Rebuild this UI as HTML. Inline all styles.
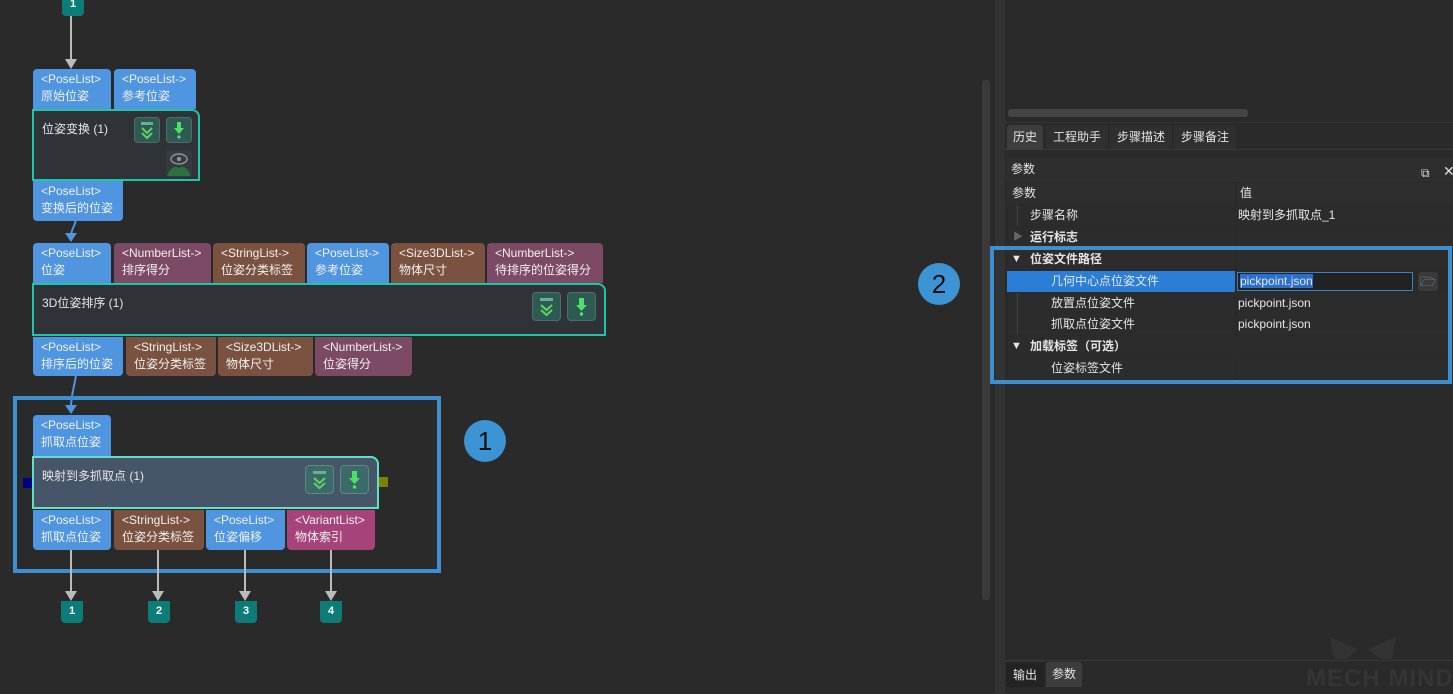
<!DOCTYPE html>
<html><head><meta charset="utf-8"><style>
*{margin:0;padding:0;box-sizing:border-box}
html,body{width:1453px;height:694px;overflow:hidden}
body{background:#2a2a2a;position:relative;font-family:"Liberation Sans","Noto Sans CJK SC",sans-serif;color:#e6e6e6}
.a{position:absolute}
.p{position:absolute;font-size:12px;line-height:17px;padding:2px 0 0 8px;color:#f0f0f0;border-radius:4px 4px 0 0;white-space:nowrap}
.pb{border-radius:0 0 4px 4px}
.bl{background:#4f95e0}.pu{background:#7d4a66}.br{background:#7b5240}.pk{background:#a7437b}
.n{position:absolute;background:#2f3337;border:2px solid #1ec5a8;border-radius:0 8px 0 0;font-size:12px}
.n span{position:absolute;left:8px;top:9px}
.btn{position:absolute;width:26px;height:26px;border:1px solid #4e6e66;background:#2d5a52;border-radius:4px}
.t{position:absolute;background:#0b7c78;color:#fff;font-size:11px;font-weight:bold;text-align:center;line-height:20px;border-radius:0 0 4px 4px;width:22px;height:22px}
.ln{position:absolute;width:2px;background:#bbb}
.ar{position:absolute;width:0;height:0;border-left:6px solid transparent;border-right:6px solid transparent;border-top:10px solid #bbb}
.row{position:absolute;left:1007px;width:446px;height:21px;font-size:12px;line-height:21px;border-bottom:1px solid #232323}
.row .c1{position:absolute;left:0;width:228px;height:21px;background:#2c2c2c}
.row .c2{position:absolute;left:230px;right:0;height:21px;background:#2c2c2c}
.tab{position:absolute;top:125px;height:24px;font-size:12px;line-height:24px;text-align:center;background:#2f2f2f;border-radius:3px 3px 0 0}
.tl{position:absolute;left:10px;top:0;width:1px;height:21px;background:#444}
</style></head><body>
<div class="a" style="left:982px;top:80px;width:8px;height:520px;background:#3a3a3a;border-radius:3px"></div>
<div class="a" style="left:995px;top:0;width:10px;height:694px;background:#323232"></div>

<div class="t" style="left:62px;top:-6px">1</div>
<div class="ln" style="left:70px;top:16px;height:44px"></div><div class="ar" style="left:65px;top:59px"></div>

<div class="p bl" style="left:33px;top:69px;width:78px;height:40px">&lt;PoseList&gt;<br>原始位姿</div>
<div class="p bl" style="left:114px;top:69px;width:82px;height:40px">&lt;PoseList-&gt;<br>参考位姿</div>
<div class="n" style="left:32px;top:109px;width:168px;height:72px"><span>位姿变换 (1)</span></div>
<div class="btn" style="left:134px;top:117px"><svg width="24" height="24"><rect x="6" y="4" width="12" height="3" fill="#6ab08a"/><path d="M7 10l5 5 5-5M7 15l5 5 5-5" stroke="#5fd26a" stroke-width="2" fill="none"/></svg></div>
<div class="btn" style="left:166px;top:117px"><svg width="24" height="24"><path d="M10 4h4v6h3l-5 6-5-6h3z" fill="#4fe06a"/><circle cx="12" cy="19" r="1.6" fill="#4fe06a"/></svg></div>
<div class="a" style="left:166px;top:150px;width:26px;height:27px;background:#343a3e;border-radius:3px"><svg width="26" height="27"><ellipse cx="13" cy="9" rx="8" ry="5" fill="none" stroke="#8a9298" stroke-width="1.5"/><circle cx="13" cy="9" r="2.2" fill="#8a9298"/><path d="M1 26c3-8 8-11 12-8 4-3 9 0 12 8z" fill="#2e7040"/></svg></div>
<div class="p bl pb" style="left:33px;top:181px;width:90px;height:40px">&lt;PoseList&gt;<br>变换后的位姿</div>
<svg class="a" style="left:60px;top:220px" width="30" height="24"><path d="M16 0 C14 8 11 10 11 16" stroke="#4f95e0" stroke-width="2" fill="none"/><path d="M5 13h12l-6 9z" fill="#4f95e0"/></svg>

<div class="p bl" style="left:33px;top:243px;width:78px;height:40px">&lt;PoseList&gt;<br>位姿</div>
<div class="p pu" style="left:114px;top:243px;width:97px;height:40px">&lt;NumberList-&gt;<br>排序得分</div>
<div class="p br" style="left:213px;top:243px;width:92px;height:40px">&lt;StringList-&gt;<br>位姿分类标签</div>
<div class="p bl" style="left:307px;top:243px;width:82px;height:40px">&lt;PoseList-&gt;<br>参考位姿</div>
<div class="p br" style="left:391px;top:243px;width:94px;height:40px">&lt;Size3DList-&gt;<br>物体尺寸</div>
<div class="p pu" style="left:487px;top:243px;width:116px;height:40px">&lt;NumberList-&gt;<br>待排序的位姿得分</div>
<div class="n" style="left:32px;top:283px;width:574px;height:53px"><span>3D位姿排序 (1)</span></div>
<div class="btn" style="left:532px;top:292px;width:29px;height:29px"><svg width="27" height="27"><rect x="7" y="5" width="13" height="3" fill="#6ab08a"/><path d="M8 12l5.5 5 5.5-5M8 17l5.5 5 5.5-5" stroke="#5fd26a" stroke-width="2" fill="none"/></svg></div>
<div class="btn" style="left:567px;top:292px;width:29px;height:29px"><svg width="27" height="27"><path d="M11 5h5v7h3l-5.5 6-5.5-6h3z" fill="#4fe06a"/><circle cx="13.5" cy="21" r="1.7" fill="#4fe06a"/></svg></div>
<div class="p bl pb" style="left:33px;top:337px;width:90px;height:39px">&lt;PoseList&gt;<br>排序后的位姿</div>
<div class="p br pb" style="left:126px;top:337px;width:90px;height:39px">&lt;StringList-&gt;<br>位姿分类标签</div>
<div class="p br pb" style="left:218px;top:337px;width:95px;height:39px">&lt;Size3DList-&gt;<br>物体尺寸</div>
<div class="p pu pb" style="left:315px;top:337px;width:97px;height:39px">&lt;NumberList-&gt;<br>位姿得分</div>
<svg class="a" style="left:60px;top:375px" width="30" height="42"><path d="M16 0 C14 14 11 20 11 32" stroke="#4f95e0" stroke-width="2" fill="none"/><path d="M5 30h12l-6 9z" fill="#4f95e0"/></svg>

<div class="a" style="left:13px;top:396px;width:428px;height:177px;border:4px solid #3d8fd0"></div>
<div class="a" style="left:464px;top:420px;width:42px;height:42px;border-radius:50%;background:#3d94d4;color:#111;font-size:26px;text-align:center;line-height:42px">1</div>

<div class="p bl" style="left:33px;top:415px;width:78px;height:41px">&lt;PoseList&gt;<br>抓取点位姿</div>
<div class="a" style="left:23px;top:478px;width:10px;height:10px;background:#000080"></div>
<div class="a" style="left:378px;top:477px;width:10px;height:10px;background:#808000"></div>
<div class="n" style="left:32px;top:456px;width:347px;height:53px;background:#465567;border-color:#60e0c8"><span>映射到多抓取点 (1)</span></div>
<div class="btn" style="left:305px;top:465px;width:29px;height:29px;background:#3b6a68;border-color:#5a8a84"><svg width="27" height="27"><rect x="7" y="5" width="13" height="3" fill="#6ab08a"/><path d="M8 12l5.5 5 5.5-5M8 17l5.5 5 5.5-5" stroke="#5fd26a" stroke-width="2" fill="none"/></svg></div>
<div class="btn" style="left:340px;top:465px;width:29px;height:29px;background:#3b6a68;border-color:#5a8a84"><svg width="27" height="27"><path d="M11 5h5v7h3l-5.5 6-5.5-6h3z" fill="#4fe06a"/><circle cx="13.5" cy="21" r="1.7" fill="#4fe06a"/></svg></div>
<div class="p bl pb" style="left:33px;top:510px;width:78px;height:40px">&lt;PoseList&gt;<br>抓取点位姿</div>
<div class="p br pb" style="left:114px;top:510px;width:90px;height:40px">&lt;StringList-&gt;<br>位姿分类标签</div>
<div class="p bl pb" style="left:206px;top:510px;width:79px;height:40px">&lt;PoseList&gt;<br>位姿偏移</div>
<div class="p pk pb" style="left:287px;top:510px;width:88px;height:40px">&lt;VariantList&gt;<br>物体索引</div>
<div class="ln" style="left:70px;top:550px;height:42px"></div><div class="ar" style="left:65px;top:591px"></div>
<div class="ln" style="left:157px;top:550px;height:42px"></div><div class="ar" style="left:152px;top:591px"></div>
<div class="ln" style="left:244px;top:550px;height:42px"></div><div class="ar" style="left:239px;top:591px"></div>
<div class="ln" style="left:330px;top:550px;height:42px"></div><div class="ar" style="left:325px;top:591px"></div>
<div class="t" style="left:61px;top:601px">1</div>
<div class="t" style="left:148px;top:601px">2</div>
<div class="t" style="left:235px;top:601px">3</div>
<div class="t" style="left:320px;top:601px">4</div>

<div class="a" style="left:1008px;top:109px;width:240px;height:8px;background:#444;border-radius:3px"></div>
<div class="a" style="left:1005px;top:122px;width:448px;height:1px;background:#333"></div>
<div class="tab" style="left:1007px;width:36px;background:#3d3d3d">历史</div>
<div class="tab" style="left:1046px;width:62px">工程助手</div>
<div class="tab" style="left:1110px;width:62px">步骤描述</div>
<div class="tab" style="left:1174px;width:62px">步骤备注</div>
<div class="a" style="left:1005px;top:149px;width:448px;height:1px;background:#3a3a3a"></div>
<div class="a" style="left:1006px;top:158px;width:447px;height:24px;background:#2e2e2e;font-size:12px;line-height:22px;padding-left:5px">参数</div>
<div class="a" style="left:1421px;top:166px;font-size:12px;color:#ddd">⧉</div>
<div class="a" style="left:1443px;top:163px;font-size:14px;color:#ddd">✕</div>
<div class="row" style="top:183px"><div class="c1" style="padding-left:5px;background:#2e2e2e">参数</div><div class="c2" style="padding-left:3px;background:#2e2e2e">值</div></div>
<div class="row" style="top:205px"><div class="c1" style="padding-left:23px"><div class="tl"></div>步骤名称</div><div class="c2" style="padding-left:1px">映射到多抓取点_1</div></div>
<div class="row" style="top:227px"><div class="c1" style="padding-left:23px;font-weight:bold"><span style="position:absolute;left:6px;color:#666;font-size:10px">▶</span>运行标志</div><div class="c2"></div></div>
<div class="row" style="top:249px"><div class="c1" style="padding-left:23px;font-weight:bold"><span style="position:absolute;left:4px;font-size:11px">▼</span>位姿文件路径</div><div class="c2"></div></div>
<div class="row" style="top:271px"><div class="c1" style="padding-left:44px;background:#2a7ed6">几何中心点位姿文件</div><div class="c2" style="background:#2a2a2a"><div class="a" style="left:0;top:1px;width:176px;height:19px;border:1px solid #3d7fc8;background:#222;line-height:17px;padding-left:2px"><span style="background:#2a6fc9">pickpoint.json</span></div><div class="a" style="left:181px;top:1px;width:20px;height:19px;background:#3a3a3a;border-radius:3px;color:#8ab;font-size:13px;line-height:19px;text-align:center">🗁</div></div></div>
<div class="row" style="top:293px"><div class="c1" style="padding-left:44px"><div class="tl"></div>放置点位姿文件</div><div class="c2" style="padding-left:1px">pickpoint.json</div></div>
<div class="row" style="top:314px"><div class="c1" style="padding-left:44px"><div class="tl"></div>抓取点位姿文件</div><div class="c2" style="padding-left:1px">pickpoint.json</div></div>
<div class="row" style="top:336px"><div class="c1" style="padding-left:23px;font-weight:bold;width:446px"><span style="position:absolute;left:4px;font-size:11px">▼</span>加载标签（可选）</div></div>
<div class="row" style="top:358px"><div class="c1" style="padding-left:44px">位姿标签文件</div><div class="c2"></div></div>
<div class="a" style="left:990px;top:246px;width:462px;height:138px;border:4px solid #3d8fd0"></div>
<div class="a" style="left:918px;top:263px;width:42px;height:42px;border-radius:50%;background:#3d94d4;color:#111;font-size:26px;text-align:center;line-height:42px">2</div>

<div class="a" style="left:1328px;top:637px;width:70px;height:24px"><svg width="70" height="24"><path d="M2 0l4 22h12L30 12z M68 0l-4 22H52L40 12z" fill="#333"/></svg></div>
<div class="a" style="left:1306px;top:665px;font-size:24px;line-height:28px;font-weight:bold;color:#353535;white-space:nowrap;letter-spacing:1px">MECH MIND</div>
<div class="a" style="left:1005px;top:660px;width:448px;height:1px;background:#3a3a3a"></div>
<div class="a" style="left:1006px;top:663px;width:38px;height:24px;background:#232323;font-size:12px;line-height:24px;text-align:center">输出</div>
<div class="a" style="left:1046px;top:662px;width:36px;height:25px;background:#3d3d3d;font-size:12px;line-height:25px;text-align:center;border-radius:3px 3px 0 0">参数</div>
</body></html>
